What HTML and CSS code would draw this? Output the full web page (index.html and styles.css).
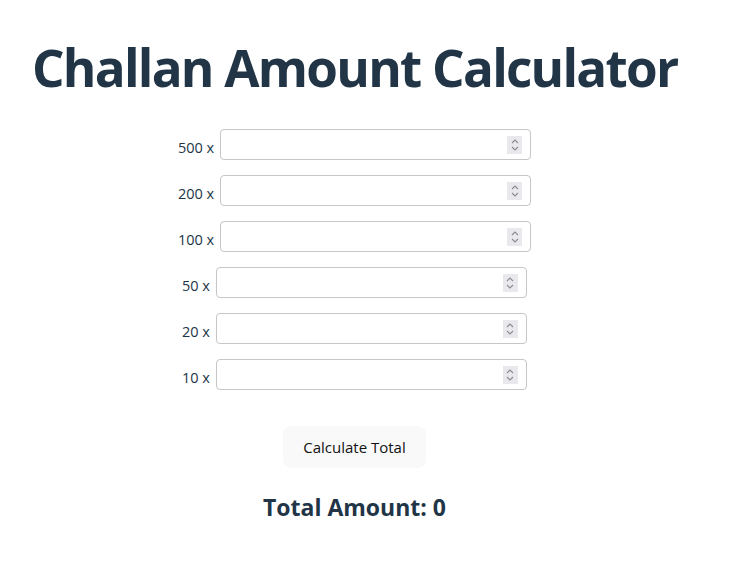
FILE: index.html
```html
<!DOCTYPE html>
<html lang="en">
<head>
<meta charset="utf-8">
<title>Challan Amount Calculator</title>
<link rel="stylesheet" href="styles.css">
</head>
<body>
<div class="app">
  <h1 class="title">Challan Amount Calculator</h1>
  <div class="rows">
    <div class="row"><label class="lbl">500 x</label><div class="field"><input class="num" type="text"><span class="spin"><svg viewBox="0 0 8 14" width="8" height="14"><path d="M1 5 L4 2 L7 5 M1 9 L4 12 L7 9" fill="none" stroke="#8a8a90" stroke-width="1.1"/></svg></span></div></div>
    <div class="row"><label class="lbl">200 x</label><div class="field"><input class="num" type="text"><span class="spin"><svg viewBox="0 0 8 14" width="8" height="14"><path d="M1 5 L4 2 L7 5 M1 9 L4 12 L7 9" fill="none" stroke="#8a8a90" stroke-width="1.1"/></svg></span></div></div>
    <div class="row"><label class="lbl">100 x</label><div class="field"><input class="num" type="text"><span class="spin"><svg viewBox="0 0 8 14" width="8" height="14"><path d="M1 5 L4 2 L7 5 M1 9 L4 12 L7 9" fill="none" stroke="#8a8a90" stroke-width="1.1"/></svg></span></div></div>
    <div class="row"><label class="lbl">50 x</label><div class="field"><input class="num" type="text"><span class="spin"><svg viewBox="0 0 8 14" width="8" height="14"><path d="M1 5 L4 2 L7 5 M1 9 L4 12 L7 9" fill="none" stroke="#8a8a90" stroke-width="1.1"/></svg></span></div></div>
    <div class="row"><label class="lbl">20 x</label><div class="field"><input class="num" type="text"><span class="spin"><svg viewBox="0 0 8 14" width="8" height="14"><path d="M1 5 L4 2 L7 5 M1 9 L4 12 L7 9" fill="none" stroke="#8a8a90" stroke-width="1.1"/></svg></span></div></div>
    <div class="row"><label class="lbl">10 x</label><div class="field"><input class="num" type="text"><span class="spin"><svg viewBox="0 0 8 14" width="8" height="14"><path d="M1 5 L4 2 L7 5 M1 9 L4 12 L7 9" fill="none" stroke="#8a8a90" stroke-width="1.1"/></svg></span></div></div>
  </div>
  <button class="calc" type="button">Calculate Total</button>
  <h2 class="total">Total Amount: 0</h2>
</div>
</body>
</html>
```
FILE: styles.css
```css
html, body {
  margin: 0;
  padding: 0;
  background: #ffffff;
}
body {
  font-family: "Open Sans", "Noto Sans", sans-serif;
  color: #213547;
}
.app {
  width: 645px;
  padding: 0 32px;
  display: flex;
  flex-direction: column;
  align-items: center;
}
.title {
  align-self: flex-start;
  margin: 39px 0 34px 0;
  font-size: 51.2px;
  line-height: 1.1;
  font-weight: 700;
  letter-spacing: -1.75px;
  white-space: nowrap;
}
.rows {
  display: flex;
  flex-direction: column;
  align-items: center;
  gap: 15px;
}
.row {
  display: flex;
  align-items: center;
  gap: 6px;
}
.lbl {
  font-size: 14.5px;
  padding-top: 5px;
  color: #213547;
}
.field {
  width: 301px;
  height: 29px;
  border: 1px solid #c6c6c6;
  border-radius: 4px;
  display: flex;
  align-items: center;
  padding-right: 8px;
  box-sizing: content-box;
  background: #fff;
}
.num {
  flex: 1;
  min-width: 0;
  border: none;
  outline: none;
  background: transparent;
  font-size: 13px;
  padding: 0 4px;
}
.spin {
  width: 15px;
  height: 18px;
  background: #e9e9ed;
  display: flex;
  align-items: center;
  justify-content: center;
}
.calc {
  margin-top: 36px;
  padding: 0 19px;
  height: 42px;
  border: 1px solid transparent;
  border-radius: 8px;
  background: #f9f9f9;
  color: #111;
  font-family: "Open Sans", "Noto Sans", sans-serif;
  font-size: 15px;
  cursor: pointer;
}
.total {
  margin: 23px 0 0 0;
  font-size: 23px;
  font-weight: 700;
  color: #213547;
}
```
